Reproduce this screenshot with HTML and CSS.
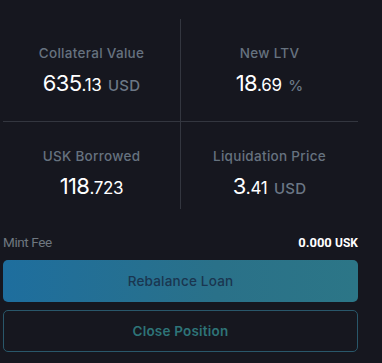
FILE: index.html
```html
<!DOCTYPE html>
<html lang="en">
<head>
    <meta charset="UTF-8">
    <meta name="viewport" content="width=device-width, initial-scale=1.0">
    <title>Position</title>
    <link rel="stylesheet" href="styles.css">
</head>
<body>
    <div class="panel">
        <div class="stats">
            <div class="stat top left">
                <div class="label">Collateral Value</div>
                <div class="value">635<small>.13</small> <span class="unit">USD</span></div>
            </div>
            <div class="stat top">
                <div class="label">New LTV</div>
                <div class="value">18<small>.69</small> <span class="unit">%</span></div>
            </div>
            <div class="stat bottom left">
                <div class="label">USK Borrowed</div>
                <div class="value">118<small>.723</small></div>
            </div>
            <div class="stat bottom">
                <div class="label">Liquidation Price</div>
                <div class="value">3<small>.41</small> <span class="unit">USD</span></div>
            </div>
        </div>

        <div class="fee-row">
            <span class="fee-label">Mint Fee</span>
            <span class="fee-value">0.000 <small>USK</small></span>
        </div>

        <button class="btn primary">Rebalance Loan</button>
        <button class="btn outline">Close Position</button>
    </div>
</body>
</html>
```

FILE: styles.css
```css
body {
    margin: 0;
    background: #16171f;
    font-family: Inter, "Open Sans", sans-serif;
    color: #fff;
}
.panel {
    width: 355px;
    padding: 19px 0 0 3px;
}
.stats {
    display: grid;
    grid-template-columns: 178px 177px;
}
.stat {
    text-align: center;
}
.stat.left {
    border-right: 1px solid #33363f;
}
.stat.top {
    height: 103px;
    padding-top: 25px;
    box-sizing: border-box;
    border-bottom: 1px solid #33363f;
}
.stat.bottom {
    height: 87px;
    padding-top: 25px;
    box-sizing: border-box;
}
.label {
    font-size: 13.5px;
    font-weight: 500;
    color: #66727f;
    line-height: 18px;
    letter-spacing: 0.3px;
}
.value {
    margin-top: 8px;
    font-size: 22px;
    font-weight: 400;
    line-height: 26px;
    letter-spacing: -0.6px;
    color: #fff;
}
.value small {
    font-size: 17px;
    letter-spacing: -0.3px;
}
.unit {
    font-size: 15px;
    font-weight: 500;
    color: #6b7786;
    letter-spacing: 0.2px;
    margin-left: 1px;
}
.fee-row {
    display: flex;
    justify-content: space-between;
    align-items: center;
    margin-top: 25px;
    height: 16px;
    font-family: Roboto, sans-serif;
}
.fee-label {
    font-size: 13.5px;
    color: #6f7780;
    letter-spacing: -0.4px;
}
.fee-value {
    font-size: 13px;
    font-weight: 700;
    color: #fff;
}
.fee-value small {
    font-size: 12px;
}
.btn {
    display: block;
    width: 355px;
    font-family: Inter, "Open Sans", sans-serif;
    font-size: 13.5px;
    font-weight: 500;
    letter-spacing: 0.2px;
    border-radius: 5px;
    cursor: pointer;
}
.primary {
    margin-top: 10px;
    height: 42px;
    border: none;
    background: linear-gradient(90deg, #1e6e9e, #2a7189 60%, #2c7687);
    color: #1a3650;
}
.outline {
    margin-top: 8px;
    height: 42px;
    background: transparent;
    border: 1px solid #29576a;
    color: #2e7478;
    font-weight: 600;
}
```
